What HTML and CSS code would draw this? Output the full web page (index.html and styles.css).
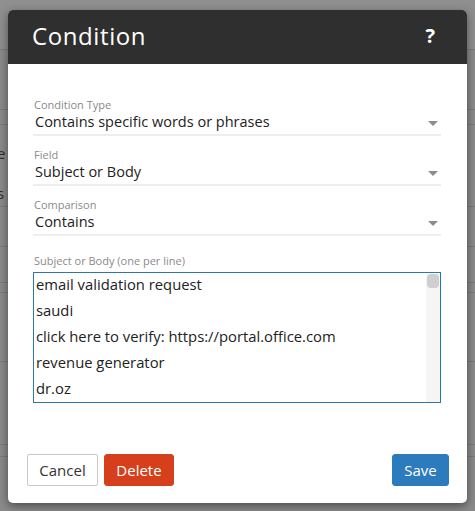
FILE: index.html
```html
<!DOCTYPE html>
<html>
<head>
<meta charset="utf-8">
<link rel="stylesheet" href="styles.css">
</head>
<body>
<div class="backdrop">
  <div class="bg-row r1"></div>
  <div class="bg-row r2"></div>
  <div class="bg-row r3"></div>
  <div class="bg-row r4"><span class="bg-text t1">e</span><span class="bg-text t2">s</span></div>
  <div class="bg-row r5"></div>
  <div class="bg-row r6"></div>
  <div class="bg-row r7"></div>
  <div class="bg-row r8"></div>
  <div class="bg-row r9"></div>
  <div class="bg-row r10"></div>
  <div class="bg-row r11"></div>
</div>
<div class="modal">
  <div class="modal-header">
    <h1 class="modal-title">Condition</h1>
    <span class="help">?</span>
  </div>
  <div class="modal-body">
    <div class="field">
      <div class="label">Condition Type</div>
      <div class="select"><span class="value">Contains specific words or phrases</span><span class="caret"></span></div>
    </div>
    <div class="field">
      <div class="label">Field</div>
      <div class="select"><span class="value">Subject or Body</span><span class="caret"></span></div>
    </div>
    <div class="field">
      <div class="label">Comparison</div>
      <div class="select"><span class="value">Contains</span><span class="caret"></span></div>
    </div>
    <div class="field text-field">
      <div class="label">Subject or Body (one per line)</div>
      <div class="textarea">
        <div class="lines">
          <div class="line">email validation request</div>
          <div class="line">saudi</div>
          <div class="line">click here to verify: https://portal.office.com</div>
          <div class="line">revenue generator</div>
          <div class="line">dr.oz</div>
        </div>
        <div class="scroll-track"><div class="scroll-thumb"></div></div>
      </div>
    </div>
  </div>
  <div class="modal-footer">
    <div class="left-btns">
      <button class="btn btn-default">Cancel</button>
      <button class="btn btn-danger">Delete</button>
    </div>
    <button class="btn btn-primary">Save</button>
  </div>
</div>
</body>
</html>
```

FILE: styles.css
```css
html, body {
  margin: 0;
  padding: 0;
}
body {
  width: 475px;
  height: 511px;
  overflow: hidden;
  background: #8a8a8a;
  font-family: "Open Sans", "Liberation Sans", sans-serif;
  position: relative;
}
.backdrop {
  display: flex;
  flex-direction: column;
}
.bg-row {
  border-bottom: 1px solid #7a7a7a;
  position: relative;
}
.r1 { height: 49px; background: #8f8f8f; }
.r2 { height: 59px; }
.r3 { height: 14px; }
.r4 { height: 81px; }
.r5 { height: 39px; }
.r6 { height: 35px; }
.r7 { height: 9px; }
.r8 { height: 68px; }
.r9 { height: 82px; }
.r10 { height: 11px; }
.r11 { height: 60px; border-bottom: none; }
.bg-text {
  position: absolute;
  left: -3px;
  font-size: 15px;
  color: #2a2a2a;
}
.t1 { top: 18px; }
.t2 { top: 58px; }

.modal {
  position: absolute;
  left: 8px;
  top: 10px;
  width: 459px;
  height: 493px;
  background: #fff;
  border-radius: 5px;
  box-shadow: 0 3px 10px rgba(0, 0, 0, 0.45);
  display: flex;
  flex-direction: column;
  overflow: hidden;
}
.modal-header {
  height: 54px;
  background: #2f2f2f;
  display: flex;
  align-items: center;
  justify-content: space-between;
  padding: 0 32px 4px 24px;
  box-sizing: border-box;
  flex-shrink: 0;
}
.modal-title {
  margin: 0;
  color: #fff;
  font-size: 24px;
  font-weight: 400;
  letter-spacing: 0.6px;
}
.help {
  color: #fff;
  font-size: 20px;
  font-weight: 700;
}
.modal-body {
  padding: 34px 26px 0 25px;
}
.field {
  margin-bottom: 12px;
}
.label {
  font-size: 11px;
  line-height: 14px;
  color: #8a8a8a;
  padding-left: 1px;
}
.select {
  height: 22px;
  font-size: 14.5px;
  color: #222;
  border-bottom: 2px solid #eeeeee;
  display: flex;
  justify-content: space-between;
  align-items: center;
  padding-left: 2px;
}
.value {
  line-height: 20px;
  margin-top: -3px;
}
.caret {
  width: 0;
  height: 0;
  border-left: 5px solid transparent;
  border-right: 5px solid transparent;
  border-top: 5px solid #8c8c8c;
  margin-right: 3px;
}
.text-field {
  margin-top: 18px;
}
.text-field .label {
  margin-bottom: 4px;
}
.textarea {
  height: 129px;
  border: 1px solid #2b7aa3;
  display: flex;
  overflow: hidden;
}
.lines {
  flex: 1;
  padding-left: 2px;
  margin-top: -2px;
}
.line {
  font-size: 14.8px;
  line-height: 26px;
  color: #222;
  white-space: nowrap;
}
.scroll-track {
  width: 12px;
  background: #f5f5f5;
  padding: 1px 1px 0 1px;
}
.scroll-thumb {
  height: 14px;
  background: #cfcfcf;
  border-radius: 4px;
}
.modal-footer {
  margin-top: auto;
  padding: 0 18px 17px 19px;
  display: flex;
  justify-content: space-between;
  align-items: center;
}
.left-btns {
  display: flex;
  gap: 6px;
}
.btn {
  font-family: "Open Sans", "Liberation Sans", sans-serif;
  font-size: 15px;
  height: 32px;
  padding: 0;
  border-radius: 3px;
  cursor: pointer;
}
.btn-default {
  width: 71px;
  background: #fff;
  border: 1px solid #c8c8c8;
  color: #333;
  border-radius: 2px;
}
.btn-danger {
  width: 70px;
  background: #d63f1b;
  border: 1px solid #d63f1b;
  color: #fff;
}
.btn-primary {
  width: 57px;
  background: #2c7bbd;
  border: 1px solid #2c7bbd;
  color: #fff;
}
```
